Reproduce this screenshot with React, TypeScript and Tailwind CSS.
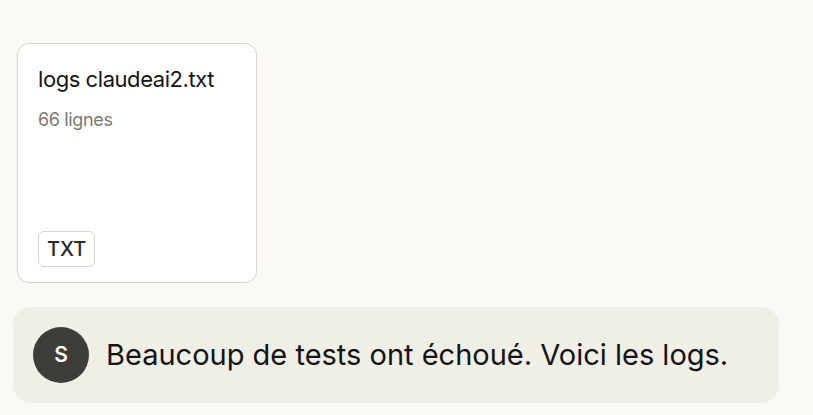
export default function App() {
    return (
        <div className="min-h-[415px] w-[813px] bg-[#faf9f5] pt-[43px] pl-[13px]" style={{ fontFamily: 'Inter, "Noto Sans", sans-serif' }}>
            <div className="flex flex-col gap-[24px]">
                {/* attachment card */}
                <div className="ml-[4px] flex h-[240px] w-[240px] flex-col justify-between rounded-[12px] border border-[#d6d4cd] bg-white px-[20px] pt-[20px] pb-[15px]">
                    <div className="flex flex-col gap-[14px]">
                        <div className="text-[22px] leading-[30px] tracking-[-0.02em] text-[#141413]">logs claudeai2.txt</div>
                        <div className="text-[18px] leading-[24px] tracking-[-0.02em] text-[#7a7973]">66 lignes</div>
                    </div>
                    <div className="flex">
                        <span className="rounded-[6px] border border-[#d6d4cd] bg-white px-[8px] py-[3px] text-[20px] font-medium leading-[28px] text-[#2b2b29]">TXT</span>
                    </div>
                </div>

                {/* user message */}
                <div className="flex h-[96px] w-[766px] items-center gap-[17px] rounded-[18px] bg-[#efeee7] pl-[20px]">
                    <div className="flex h-[56px] w-[56px] shrink-0 items-center justify-center rounded-full bg-[#3d3d3a] text-[21px] font-semibold text-white">S</div>
                    <div className="text-[29px] leading-[38px] text-[#141413]">Beaucoup de tests ont échoué. Voici les logs.</div>
                </div>
            </div>
        </div>
    )
}
